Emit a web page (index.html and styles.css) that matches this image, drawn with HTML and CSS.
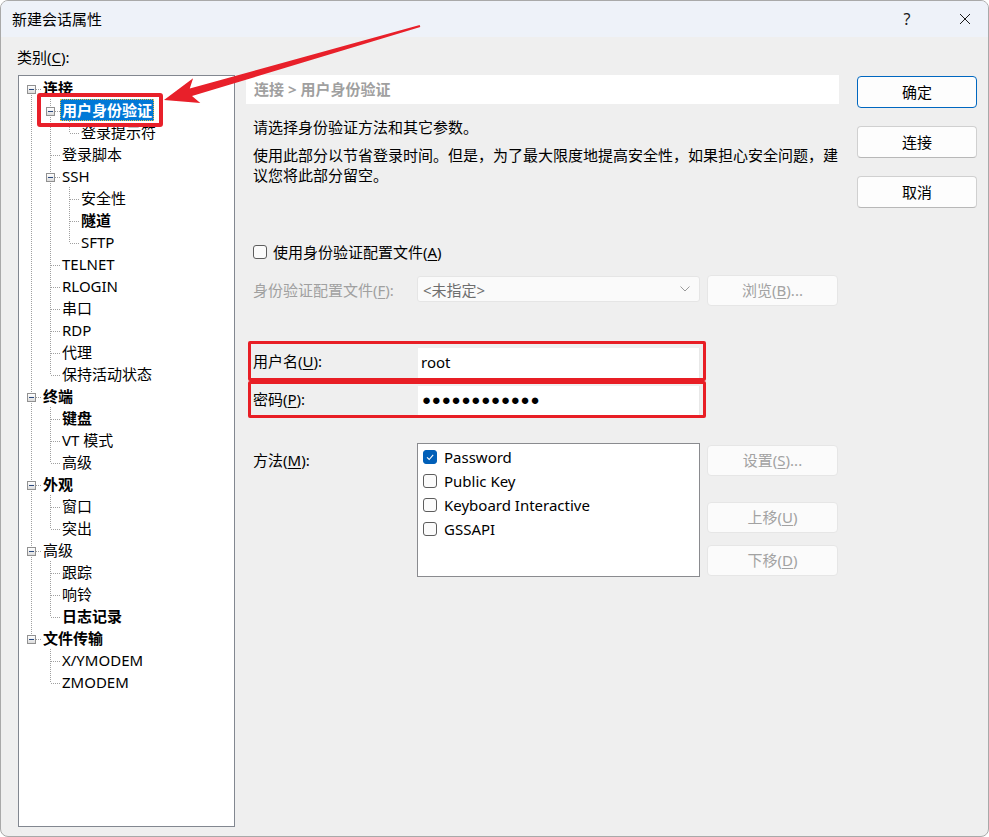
FILE: index.html
```html
<!DOCTYPE html>
<html lang="zh-CN">
<head>
  <meta charset="UTF-8" />
  <title>新建会话属性</title>
  <link rel="stylesheet" href="styles.css">
</head>
<body>

  <div class="window">
    <div class="titlebar">
      <span class="title">新建会话属性</span>
      <span class="tb-btn help">?</span>
      <span class="tb-btn close">
        <svg width="12" height="12" viewBox="0 0 12 12"><path d="M1 1 L11 11 M11 1 L1 11" stroke="#1a1a1a" stroke-width="1" fill="none"/></svg>
      </span>
    </div>

    <div class="content">
      <div class="left">
        <div class="cat-label">类别(<u>C</u>):</div>
        <ul class="tree">
          <li><div class="row"><span class="exp"></span><span class="lbl b">连接</span></div>
            <ul>
              <li><div class="row"><span class="exp"></span><span class="lbl b sel">用户身份验证</span></div>
                <ul>
                  <li><div class="row"><span class="lbl">登录提示符</span></div></li>
                </ul>
              </li>
              <li><div class="row"><span class="lbl">登录脚本</span></div></li>
              <li><div class="row"><span class="exp"></span><span class="lbl">SSH</span></div>
                <ul>
                  <li><div class="row"><span class="lbl">安全性</span></div></li>
                  <li><div class="row"><span class="lbl b">隧道</span></div></li>
                  <li><div class="row"><span class="lbl">SFTP</span></div></li>
                </ul>
              </li>
              <li><div class="row"><span class="lbl">TELNET</span></div></li>
              <li><div class="row"><span class="lbl">RLOGIN</span></div></li>
              <li><div class="row"><span class="lbl">串口</span></div></li>
              <li><div class="row"><span class="lbl">RDP</span></div></li>
              <li><div class="row"><span class="lbl">代理</span></div></li>
              <li><div class="row"><span class="lbl">保持活动状态</span></div></li>
            </ul>
          </li>
          <li><div class="row"><span class="exp"></span><span class="lbl b">终端</span></div>
            <ul>
              <li><div class="row"><span class="lbl b">键盘</span></div></li>
              <li><div class="row"><span class="lbl">VT 模式</span></div></li>
              <li><div class="row"><span class="lbl">高级</span></div></li>
            </ul>
          </li>
          <li><div class="row"><span class="exp"></span><span class="lbl b">外观</span></div>
            <ul>
              <li><div class="row"><span class="lbl">窗口</span></div></li>
              <li><div class="row"><span class="lbl">突出</span></div></li>
            </ul>
          </li>
          <li><div class="row"><span class="exp"></span><span class="lbl">高级</span></div>
            <ul>
              <li><div class="row"><span class="lbl">跟踪</span></div></li>
              <li><div class="row"><span class="lbl">响铃</span></div></li>
              <li><div class="row"><span class="lbl b">日志记录</span></div></li>
            </ul>
          </li>
          <li><div class="row"><span class="exp"></span><span class="lbl b">文件传输</span></div>
            <ul>
              <li><div class="row"><span class="lbl">X/YMODEM</span></div></li>
              <li><div class="row"><span class="lbl">ZMODEM</span></div></li>
            </ul>
          </li>
        </ul>
      </div>

      <div class="main">
        <div class="crumb">连接 &gt; 用户身份验证</div>
        <p class="desc">请选择身份验证方法和其它参数。</p>
        <p class="desc more">使用此部分以节省登录时间。但是，为了最大限度地提高安全性，如果担心安全问题，建议您将此部分留空。</p>

        <div class="check-row">
          <span class="cb"></span>
          <span>使用身份验证配置文件(<u>A</u>)</span>
        </div>

        <div class="field-row">
          <span class="flabel off">身份验证配置文件(<u>F</u>):</span>
          <div class="combo">
            <span>&lt;未指定&gt;</span>
            <svg width="10" height="6" viewBox="0 0 10 6"><path d="M0.5 0.5 L5 5 L9.5 0.5" stroke="#9a9a9a" stroke-width="1" fill="none"/></svg>
          </div>
          <div class="btn-off tall">浏览(<u>B</u>)...</div>
        </div>

        <div class="creds">
          <div class="cred">
            <span class="clabel">用户名(<u>U</u>):</span>
            <div class="input">root</div>
          </div>
          <div class="cred pw">
            <span class="clabel">密码(<u>P</u>):</span>
            <div class="input dots">●●●●●●●●●●●●</div>
          </div>
        </div>

        <div class="method-row">
          <span class="mlabel">方法(<u>M</u>):</span>
          <div class="listbox">
            <div class="item"><span class="cb on"><svg width="12" height="12" viewBox="0 0 12 12"><path d="M3 6.3 L5.2 8.5 L9.2 3.8" stroke="#fff" stroke-width="1.1" fill="none"/></svg></span>Password</div>
            <div class="item"><span class="cb"></span>Public Key</div>
            <div class="item"><span class="cb"></span>Keyboard Interactive</div>
            <div class="item"><span class="cb"></span>GSSAPI</div>
          </div>
          <div class="side-btns">
            <div class="btn-off">设置(<u>S</u>)...</div>
            <div class="btn-off up">上移(<u>U</u>)</div>
            <div class="btn-off down">下移(<u>D</u>)</div>
          </div>
        </div>
      </div>

      <div class="actions">
        <div class="btn default">确定</div>
        <div class="btn">连接</div>
        <div class="btn">取消</div>
      </div>
    </div>

    <!-- 标注：选中项红框和箭头 -->
    <div class="mark-sel"></div>
    <svg class="arrow" width="989" height="837" viewBox="0 0 989 837">
      <polygon fill="#e8202a" points="164,100 200.3,103.1 192,96.1 420.3,27 419.7,25 189.8,88.5 193.1,78.2"/>
    </svg>
  </div>

</body>
</html>
```

FILE: styles.css
```css
html {
  background: #fff;
}
body {
  margin: 0;
  font-family: "Noto Sans", "Noto Sans CJK SC", sans-serif;
  font-size: 15px;
  color: #000;
}
u {
  text-underline-offset: 2px;
}
.window {
  position: relative;
  width: 989px;
  height: 837px;
  box-sizing: border-box;
  border: 1px solid #a9a9a9;
  border-radius: 8px;
  background: #efefef;
  overflow: hidden;
}
.titlebar {
  height: 36px;
  background: #eef2f9;
  display: flex;
  align-items: center;
  padding-left: 11px;
}
.title {
  line-height: 20px;
  flex: 1;
}
.tb-btn {
  width: 46px;
  height: 36px;
  display: flex;
  align-items: center;
  justify-content: center;
  color: #1a1a1a;
}
.help {
  margin-right: 12px;
  font-size: 16px;
}

/* 内容区 */
.content {
  display: flex;
  align-items: flex-start;
  padding: 10px 0 0 16px;
}
.left {
  width: 218px;
}
.cat-label {
  line-height: 20px;
  margin-bottom: 8px;
}
.tree {
  list-style: none;
  margin: 0 0 0 1px;
  padding: 1px 0 0 0;
  width: 217px;
  height: 752px;
  box-sizing: border-box;
  background: #fff;
  border: 1px solid #828790;
}
.tree ul {
  list-style: none;
  margin: 0;
  padding-left: 19px;
}
.tree li {
  position: relative;
}
.tree li::before {
  content: "";
  position: absolute;
  left: 12px;
  top: 0;
  bottom: 0;
  width: 1px;
  background: repeating-linear-gradient(to bottom, #a0a0a0 0 1px, transparent 1px 2px);
}
.tree li:last-child::before {
  bottom: auto;
  height: 12px;
}
.tree > li:first-child::before {
  top: 12px;
}
.row {
  position: relative;
  height: 22px;
  padding-left: 22px;
  display: flex;
  align-items: center;
}
.row::before {
  content: "";
  position: absolute;
  left: 13px;
  top: 12px;
  width: 9px;
  height: 1px;
  background: repeating-linear-gradient(to right, #a0a0a0 0 1px, transparent 1px 2px);
}
.exp {
  position: absolute;
  left: 8px;
  top: 8px;
  width: 9px;
  height: 9px;
  box-sizing: border-box;
  border: 1px solid #919191;
  background: linear-gradient(#fff, #dcdcdc);
  z-index: 1;
}
.exp::after {
  content: "";
  position: absolute;
  left: 1px;
  top: 3px;
  width: 5px;
  height: 1px;
  background: #2b4a7e;
}
.lbl {
  padding: 0 2px;
  line-height: 22px;
  white-space: nowrap;
}
.lbl.b {
  font-weight: 700;
}
.lbl.sel {
  background: #0078d7;
  color: #fff;
  outline: 1px dotted #f0c040;
  outline-offset: -1px;
}

/* 右侧主区域 */
.main {
  width: 593px;
  margin: 28px 0 0 11px;
}
.crumb {
  height: 29px;
  line-height: 29px;
  background: #fff;
  padding-left: 8px;
  color: #a0a0a0;
  font-weight: 700;
}
.desc {
  margin: 13px 0 0 7px;
  line-height: 20px;
}
.desc.more {
  margin-top: 8px;
}
.check-row {
  display: flex;
  align-items: center;
  height: 20px;
  margin: 57px 0 0 7px;
  line-height: 20px;
}
.cb {
  width: 14px;
  height: 14px;
  box-sizing: border-box;
  border: 1px solid #5d5d5d;
  border-radius: 3px;
  background: #fbfbfb;
  margin-right: 6px;
  display: flex;
  align-items: center;
  justify-content: center;
  flex: none;
}
.cb.on {
  background: #005fb8;
  border-color: #005fb8;
}
.field-row,
.method-row {
  display: grid;
  grid-template-columns: 164px 283px 138px;
  align-items: start;
  margin-left: 7px;
}
.field-row {
  margin-top: 13px;
}
.flabel {
  line-height: 31px;
}
.off {
  color: #a0a0a0;
}
.combo {
  margin-top: 1px;
  height: 26px;
  box-sizing: border-box;
  background: #fafafa;
  border: 1px solid #e5e5e5;
  border-radius: 3px;
  display: flex;
  align-items: center;
  justify-content: space-between;
  padding: 0 9px 0 5px;
  color: #6e6e6e;
}
.btn-off {
  height: 31px;
  box-sizing: border-box;
  line-height: 29px;
  text-align: center;
  background: #fbfbfb;
  border: 1px solid #e6e6e6;
  border-radius: 4px;
  color: #a2a2a2;
}
.btn-off.tall,
.side-btns {
  margin-left: 7px;
}

.creds {
  width: 458px;
  margin: 35px 0 0 2px;
}
.cred {
  display: flex;
  height: 40px;
  box-sizing: border-box;
  border: 3px solid #e81e25;
  border-radius: 2px;
}
.clabel {
  width: 165px;
  padding-left: 2px;
  line-height: 34px;
  flex: none;
}
.input {
  width: 282px;
  height: 30px;
  margin-top: 4px;
  box-sizing: border-box;
  background: #fff;
  border-right: 1px solid #e8e8e8;
  padding-left: 3px;
  line-height: 28px;
}
.cred.pw {
  height: 37px;
}
.cred.pw .clabel {
  line-height: 31px;
}
.cred.pw .input {
  height: 29px;
  margin-top: 2px;
}
.dots {
  font-family: "Liberation Sans", "DejaVu Sans", sans-serif;
  font-size: 15px;
  letter-spacing: 0.8px;
  padding-left: 4px;
}

.method-row {
  margin-top: 25px;
}
.mlabel {
  margin-top: 7px;
  line-height: 20px;
}
.listbox {
  height: 134px;
  box-sizing: border-box;
  background: #fff;
  border: 1px solid #8a8b8f;
  padding: 1px 0 0 5px;
}
.item {
  height: 24px;
  display: flex;
  align-items: center;
}
.item .cb {
  margin-right: 7px;
}
.side-btns {
  display: flex;
  flex-direction: column;
  margin-top: 2px;
}
.btn-off.up {
  margin-top: 26px;
}
.btn-off.down {
  margin-top: 12px;
}

/* 右侧按钮 */
.actions {
  width: 120px;
  margin: 29px 0 0 18px;
  display: flex;
  flex-direction: column;
  gap: 18px;
}
.btn {
  height: 32px;
  box-sizing: border-box;
  line-height: 30px;
  text-align: center;
  background: #fdfdfd;
  border: 1px solid #d0d0d0;
  border-bottom-color: #b8b8b8;
  border-radius: 4px;
}
.btn.default {
  border-color: #0067c0;
}

/* 标注 */
.mark-sel {
  position: absolute;
  left: 36px;
  top: 92px;
  width: 126px;
  height: 34px;
  box-sizing: border-box;
  border: 4px solid #e8202a;
  border-radius: 3px;
}
.arrow {
  position: absolute;
  left: -1px;
  top: -1px;
  pointer-events: none;
}
```
